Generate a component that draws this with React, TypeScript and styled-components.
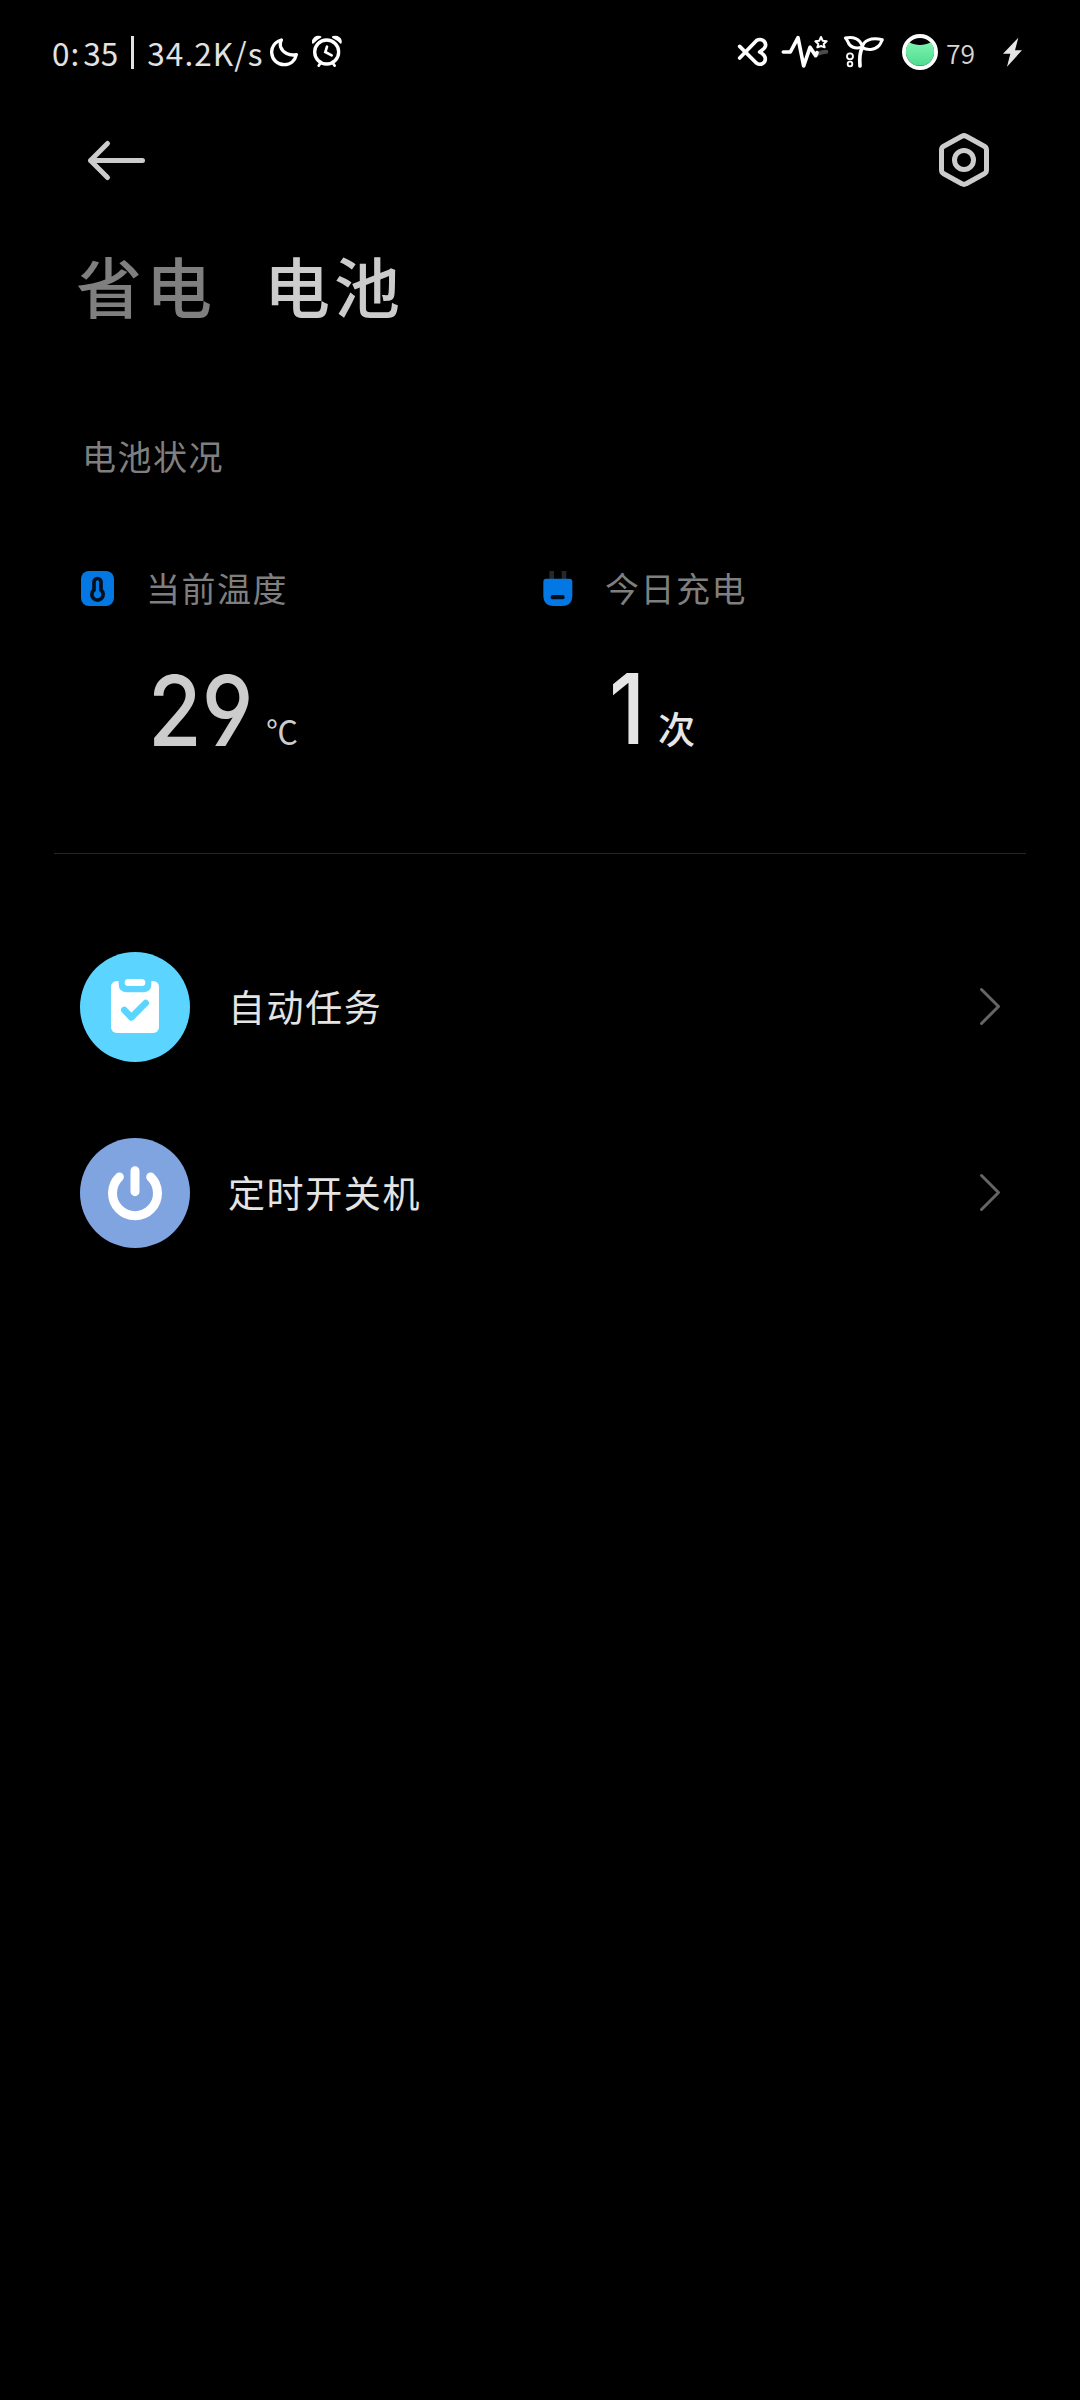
import React from "react";
import styled, { createGlobalStyle } from "styled-components";

const GlobalStyle = createGlobalStyle`
  *, *::before, *::after { box-sizing: border-box; }
  html, body { margin: 0; padding: 0; background: #000; }
  svg { display: block; flex: none; }
`;

const Screen = styled.main`
  width: 1080px;
  height: 2400px;
  overflow: hidden;
  display: flex;
  flex-direction: column;
  background: #000;
  color: #e3e3e3;
  font-family: "Noto Sans CJK SC", sans-serif;
  white-space: nowrap;
`;

const StatusBar = styled.header`
  height: 90px;
  padding: 20px 55px 0 51px;
  display: flex;
  justify-content: space-between;
`;

const StatusGroup = styled.div`
  display: flex;
  align-items: center;
`;

const Clock = styled.div`
  width: 219px;
  height: 70px;
  padding: 0 0 6px 1px;
  display: flex;
  align-items: center;
  font-size: 31.5px;
  line-height: 62px;
  color: #e2e2e2;
`;

const ClockPart = styled.span<{ $gap?: number; $track?: number }>`
  margin-right: ${(p) => p.$gap ?? 0}px;
  letter-spacing: ${(p) => p.$track ?? 0}px;
`;

const ClockBar = styled.span`
  width: 3px;
  height: 33px;
  margin: 1px 13px 0 13px;
  background: #e2e2e2;
`;

const Gap = styled.span<{ $w: number }>`
  flex: none;
  width: ${(p) => p.$w}px;
`;

const Percent = styled.span`
  width: 60px;
  height: 70px;
  padding-left: 6px;
  font-size: 26.5px;
  font-weight: 350;
  line-height: 65px;
  color: #d6d6d6;
`;

const Toolbar = styled.nav`
  height: 137px;
  padding: 43px 89px 0 86px;
  display: flex;
  justify-content: space-between;
  align-items: flex-start;
`;

const IconButton = styled.button`
  padding: 0;
  border: 0;
  background: none;
  color: #ccc;
`;

const Tabs = styled.div`
  height: 114px;
  padding: 0 76px;
  display: flex;
  align-items: center;
  gap: 48px;
`;

const Tab = styled.h1<{ $active?: boolean }>`
  margin: 0;
  font-size: 66px;
  line-height: 114px;
  font-weight: 500;
  letter-spacing: 4px;
  color: ${(p) => (p.$active ? "#ccc" : "#7f7f7f")};
`;

const SectionTitle = styled.h2`
  height: 60px;
  margin: 85px 0 0;
  padding-left: 82px;
  font-size: 34px;
  line-height: 60px;
  font-weight: 400;
  letter-spacing: 1.5px;
  color: #7f7f7f;
`;

const Stats = styled.section`
  height: 297px;
  margin: 71px 54px 0;
  padding-left: 27px;
  display: grid;
  grid-template-columns: 462px 1fr;
  border-bottom: 1px solid #252525;
`;

const Stat = styled.div`
  display: flex;
  flex-direction: column;
`;

const StatHead = styled.div`
  height: 63px;
  display: flex;
  align-items: center;
  font-size: 34px;
  letter-spacing: 1.5px;
  color: #7f7f7f;
`;

const StatLabel = styled.span<{ $gap: number }>`
  margin-left: ${(p) => p.$gap}px;
  padding-bottom: 2px;
  line-height: 61px;
`;

const StatValue = styled.div<{ $indent: number; $top: number; $color: string }>`
  height: 120px;
  margin-top: ${(p) => p.$top}px;
  padding-left: ${(p) => p.$indent}px;
  display: flex;
  align-items: baseline;
  color: ${(p) => p.$color};
`;

const Figure = styled.span<{ $w: number }>`
  width: ${(p) => p.$w}px;
  font-family: Inter, sans-serif;
  font-size: 98px;
  line-height: 120px;
  font-weight: 500;
  font-feature-settings: "cv04";
  transform: scaleX(0.89);
  transform-origin: 0 50%;
`;

const Unit = styled.span<{ $size: number; $weight: number }>`
  font-size: ${(p) => p.$size}px;
  font-weight: ${(p) => p.$weight};
  line-height: 50px;
`;

const DegreeUnit = styled(Unit)`
  transform: translateY(-2px);
`;

const List = styled.ul`
  margin: 60px 0 0;
  padding: 0;
  list-style: none;
`;

const Item = styled.li`
  height: 186px;
  padding: 0 77px 0 80px;
  display: flex;
  align-items: center;
`;

const Disc = styled.div<{ $bg: string }>`
  width: 110px;
  height: 110px;
  display: flex;
  align-items: center;
  justify-content: center;
  border-radius: 50%;
  background: ${(p) => p.$bg};
`;

const ItemLabel = styled.span`
  flex: 1;
  margin-left: 38px;
  padding-bottom: 2px;
  font-size: 37px;
  line-height: 60px;
  letter-spacing: 1.6px;
  color: #e4e4e4;
`;

const Moon = () => (
  <svg width="30" height="70" viewBox="690 0 90 210" fill="none" stroke="#fff" strokeWidth="10" strokeLinejoin="round">
    <path d="M724 60C704 66 694 82 695 99C697 120 713 134 733 134C751 134 765 122 769 104C748 108 728 98 722 81C720 73 721 66 724 60Z" />
  </svg>
);

const Alarm = () => (
  <svg width="35" height="70" viewBox="810 0 105 210" fill="none" stroke="#fff" strokeLinecap="round">
    <circle cx="860" cy="96" r="36" strokeWidth="10" />
    <path d="M819 68C818 56 827 48 841 51C832 56 825 61 819 68ZM902 68C904 56 894 48 879 51C889 56 896 61 902 68Z" fill="#fff" strokeWidth="6" strokeLinejoin="round" />
    <path d="M861 80L856 96L875 106" strokeWidth="8" />
    <path d="M840 131L836 137M880 131L884 137" strokeWidth="8" />
  </svg>
);

const Knot = () => (
  <svg width="35" height="70" viewBox="45 0 105 210" fill="none" stroke="#fff" strokeWidth="11" strokeLinecap="round" strokeLinejoin="round">
    <path d="M59 79L109 129C122 138 136 129 136 116C136 108 131 103 119 96C131 88 137 83 137 75C136 61 122 54 109 62L59 114" />
  </svg>
);

const Pulse = () => (
  <svg width="50" height="70" viewBox="180 0 150 210" fill="none" strokeLinecap="round" strokeLinejoin="round">
    <path d="M290 103C300 99 304 95 319 95" stroke="#4b4b4b" strokeWidth="12" />
    <path d="M190 96H211L234 53L251 138L270 82L287 107L291 98" stroke="#fff" strokeWidth="11" />
    <path d="M303 51L308 62L320 64L311 72L314 82L303 78L292 82L295 72L286 64L298 62Z" stroke="#fff" strokeWidth="6" />
  </svg>
);

const Sprout = () => (
  <svg width="43" height="70" viewBox="366 0 129 210" fill="none" stroke="#fff" strokeLinecap="round" strokeLinejoin="round">
    <path d="M376 54C398 49 421 55 427 81C406 88 389 81 384 66C382 61 379 57 376 54ZM427 83C429 62 452 51 487 59C482 68 482 72 477 77C463 91 443 92 427 83Z" strokeWidth="9" />
    <path d="M427 83C418 100 418 117 420 138" strokeWidth="11" />
    <circle cx="390" cy="109" r="9" strokeWidth="5.500" />
    <circle cx="390" cy="132" r="7" strokeWidth="5.500" />
  </svg>
);

const BatteryBall = () => (
  <svg width="40" height="70" viewBox="540 0 120 210">
    <defs>
      <linearGradient id="charge" x1="0" y1="0" x2="0" y2="1">
        <stop offset="0" stopColor="#7df2b0" />
        <stop offset="1" stopColor="#4fdc90" />
      </linearGradient>
    </defs>
    <circle cx="600" cy="96" r="48" fill="#000" stroke="#fff" strokeWidth="12" />
    <path d="M568 67C587 78 613 78 632 67A42.500 42.500 0 1 1 568 67Z" fill="url(#charge)" />
  </svg>
);

const Bolt = () => (
  <svg width="25" height="70" viewBox="840 0 75 210" fill="#e6e6e6">
    <path d="M895 53L849 101H871L861 140L906 91H885Z" />
  </svg>
);

const BackArrow = () => (
  <svg width="62" height="56" viewBox="0 0 62 56" fill="none" stroke="currentColor" strokeWidth="5" strokeLinecap="round" strokeLinejoin="round">
    <path d="M4.500 27.500H56.500M21.500 10.500L4.500 27.500L21.500 44.500" />
  </svg>
);

const HexNut = () => (
  <svg width="54" height="58" viewBox="0 0 54 58" fill="none" stroke="currentColor" strokeWidth="5" strokeLinejoin="round">
    <path d="M24.800 3.300Q27 2 29.200 3.300L47.300 13.300Q49.500 14.500 49.500 17V37Q49.500 39.500 47.300 40.700L29.200 50.700Q27 52 24.800 50.700L6.700 40.700Q4.500 39.500 4.500 37V17Q4.500 14.500 6.700 13.300Z" />
    <circle cx="27" cy="27" r="9.500" />
  </svg>
);

const Thermometer = () => (
  <svg width="33" height="35" viewBox="63 453 99 105">
    <rect x="63" y="453" width="99" height="105" rx="24" fill="#0377e2" />
    <path d="M102 510V486A10.500 10.500 0 0 1 123 486V510A17 17 0 1 1 102 510Z" fill="none" stroke="#03101c" strokeWidth="11" />
  </svg>
);

const Plug = () => (
  <svg width="30" height="35" viewBox="68 93 90 105">
    <path d="M87 93H101V120H87ZM124 93H138V120H124Z" fill="#24282b" />
    <path d="M78 116H147Q156 116 156 125V166Q156 198 125 198H100Q69 198 69 166V125Q69 116 78 116Z" fill="#0377e2" />
    <rect x="91" y="165" width="42" height="13" rx="6.500" fill="#03101c" />
  </svg>
);

const TaskGlyph = () => (
  <svg width="110" height="110" viewBox="120 366 330 330">
    <rect x="213" y="453" width="144" height="156" rx="17" fill="#fff" />
    <path d="M236 446V462Q236 487 261 487H309Q334 487 334 462V446Z" fill="#5bd5ff" />
    <rect x="254" y="447" width="62" height="21" rx="10.500" fill="#fff" />
    <path d="M253 540L274 562L317 519" fill="none" stroke="#5bd5ff" strokeWidth="20" strokeLinecap="round" strokeLinejoin="round" />
  </svg>
);

const PowerGlyph = () => (
  <svg width="110" height="110" viewBox="120 924 330 330" fill="none" stroke="#fff" strokeWidth="27" strokeLinecap="round">
    <path d="M285 1022V1085M238 1041A67.500 67.500 0 1 0 332 1041" />
  </svg>
);

const Chevron = () => (
  <svg width="24" height="40" viewBox="0 0 24 40" fill="none" stroke="#656565" strokeWidth="3" strokeLinecap="round" strokeLinejoin="round">
    <path d="M2.500 2.500L19.500 19.500L2.500 36.500" />
  </svg>
);

const entries = [
  { label: "自动任务", bg: "#5bd5ff", Glyph: TaskGlyph },
  { label: "定时开关机", bg: "#7fa4df", Glyph: PowerGlyph },
];

export default function App() {
  return (
    <Screen>
      <GlobalStyle />
      <StatusBar>
        <StatusGroup>
          <Clock>
            <ClockPart $gap={1}>0</ClockPart>
            <ClockPart $gap={4}>:</ClockPart>
            <ClockPart>35</ClockPart>
            <ClockBar />
            <ClockPart $track={1.1}>34.2K/s</ClockPart>
          </Clock>
          <Moon />
          <Gap $w={10} />
          <Alarm />
        </StatusGroup>
        <StatusGroup>
          <Knot />
          <Gap $w={10} />
          <Pulse />
          <Gap $w={12} />
          <Sprout />
          <Gap $w={15} />
          <BatteryBall />
          <Percent>79</Percent>
          <Bolt />
        </StatusGroup>
      </StatusBar>
      <Toolbar>
        <IconButton aria-label="返回">
          <BackArrow />
        </IconButton>
        <IconButton aria-label="设置">
          <HexNut />
        </IconButton>
      </Toolbar>
      <Tabs>
        <Tab>省电</Tab>
        <Tab $active>电池</Tab>
      </Tabs>
      <SectionTitle>电池状况</SectionTitle>
      <Stats>
        <Stat>
          <StatHead>
            <Thermometer />
            <StatLabel $gap={32}>当前温度</StatLabel>
          </StatHead>
          <StatValue $indent={67} $top={31} $color="#ccc">
            <Figure $w={118}>29</Figure>
            <DegreeUnit $size={32} $weight={400}>℃</DegreeUnit>
          </StatValue>
        </Stat>
        <Stat>
          <StatHead>
            <Plug />
            <StatLabel $gap={32}>今日充电</StatLabel>
          </StatHead>
          <StatValue $indent={66} $top={29} $color="#e6e6e6">
            <Figure $w={49}>1</Figure>
            <Unit $size={37} $weight={500}>次</Unit>
          </StatValue>
        </Stat>
      </Stats>
      <List>
        {entries.map(({ label, bg, Glyph }) => (
          <Item key={label}>
            <Disc $bg={bg}>
              <Glyph />
            </Disc>
            <ItemLabel>{label}</ItemLabel>
            <Chevron />
          </Item>
        ))}
      </List>
    </Screen>
  );
}
